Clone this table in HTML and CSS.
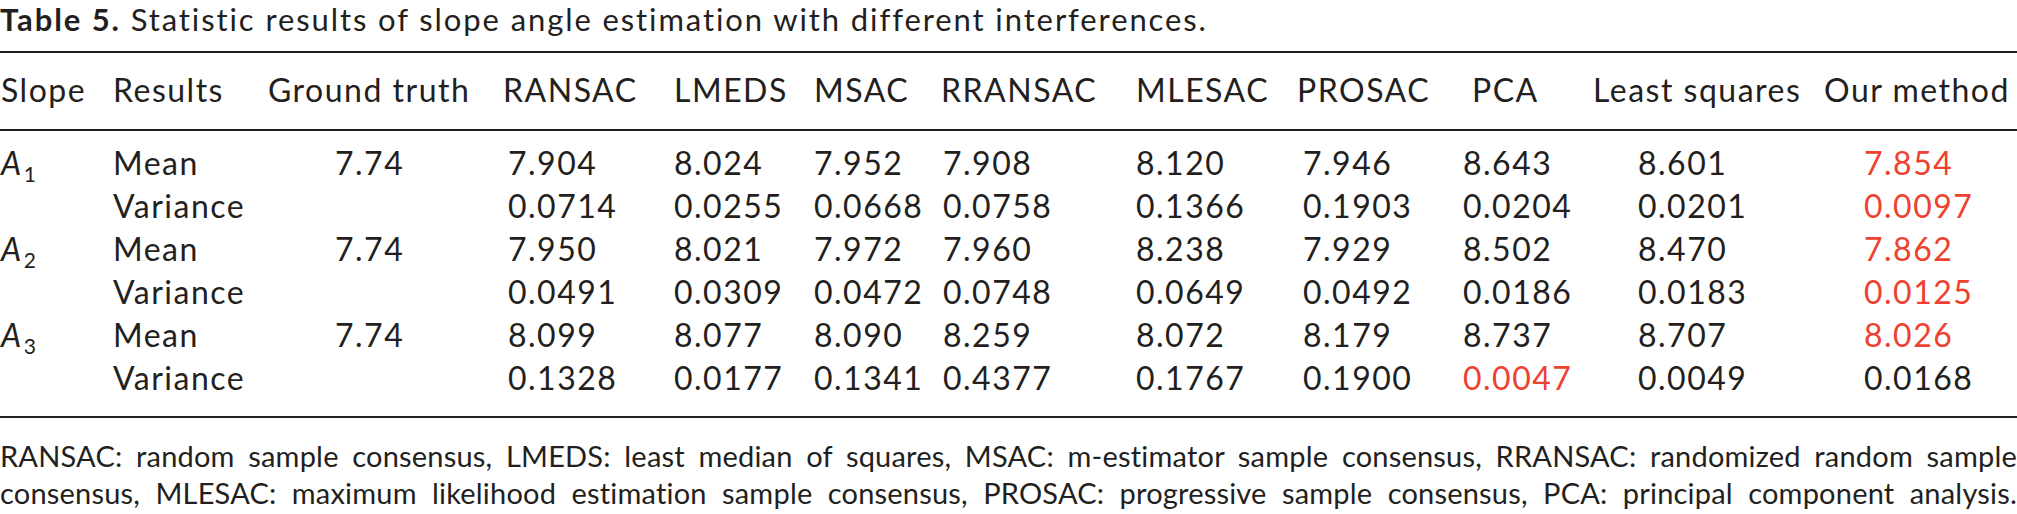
FILE: index.html
```html
<!DOCTYPE html>
<html lang="en">
<head>
<meta charset="utf-8">
<title>Table 5</title>
<link rel="stylesheet" href="styles.css">
</head>
<body>
<div class="page">
  <p class="caption"><b>Table 5.</b> Statistic results of slope angle estimation with different interferences.</p>
  <table class="results">
    <colgroup>
      <col class="c-slope"><col class="c-res"><col class="c-gt"><col class="c-ransac"><col class="c-lmeds"><col class="c-msac"><col class="c-rransac"><col class="c-mlesac"><col class="c-prosac"><col class="c-pca"><col class="c-ls"><col class="c-our">
    </colgroup>
    <thead>
      <tr>
        <th>Slope</th><th>Results</th><th class="h-gt">Ground truth</th><th class="h-ransac">RANSAC</th><th class="h-lmeds">LMEDS</th><th class="h-msac">MSAC</th><th class="h-rransac">RRANSAC</th><th class="h-mlesac">MLESAC</th><th class="h-prosac">PROSAC</th><th class="h-pca">PCA</th><th class="h-ls">Least squares</th><th class="h-our">Our method</th>
      </tr>
    </thead>
    <tbody>
      <tr class="first">
        <td><i>A</i><sub>1</sub></td><td>Mean</td><td class="v-gt">7.74</td><td class="v-ransac">7.904</td><td class="v-lmeds">8.024</td><td class="v-msac">7.952</td><td class="v-rransac">7.908</td><td class="v-mlesac">8.120</td><td class="v-prosac">7.946</td><td class="v-pca">8.643</td><td class="v-ls">8.601</td><td class="v-our hl">7.854</td>
      </tr>
      <tr>
        <td></td><td>Variance</td><td class="v-gt"></td><td class="v-ransac">0.0714</td><td class="v-lmeds">0.0255</td><td class="v-msac">0.0668</td><td class="v-rransac">0.0758</td><td class="v-mlesac">0.1366</td><td class="v-prosac">0.1903</td><td class="v-pca">0.0204</td><td class="v-ls">0.0201</td><td class="v-our hl">0.0097</td>
      </tr>
      <tr>
        <td><i>A</i><sub>2</sub></td><td>Mean</td><td class="v-gt">7.74</td><td class="v-ransac">7.950</td><td class="v-lmeds">8.021</td><td class="v-msac">7.972</td><td class="v-rransac">7.960</td><td class="v-mlesac">8.238</td><td class="v-prosac">7.929</td><td class="v-pca">8.502</td><td class="v-ls">8.470</td><td class="v-our hl">7.862</td>
      </tr>
      <tr>
        <td></td><td>Variance</td><td class="v-gt"></td><td class="v-ransac">0.0491</td><td class="v-lmeds">0.0309</td><td class="v-msac">0.0472</td><td class="v-rransac">0.0748</td><td class="v-mlesac">0.0649</td><td class="v-prosac">0.0492</td><td class="v-pca">0.0186</td><td class="v-ls">0.0183</td><td class="v-our hl">0.0125</td>
      </tr>
      <tr>
        <td><i>A</i><sub>3</sub></td><td>Mean</td><td class="v-gt">7.74</td><td class="v-ransac">8.099</td><td class="v-lmeds">8.077</td><td class="v-msac">8.090</td><td class="v-rransac">8.259</td><td class="v-mlesac">8.072</td><td class="v-prosac">8.179</td><td class="v-pca">8.737</td><td class="v-ls">8.707</td><td class="v-our hl">8.026</td>
      </tr>
      <tr class="last">
        <td></td><td>Variance</td><td class="v-gt"></td><td class="v-ransac">0.1328</td><td class="v-lmeds">0.0177</td><td class="v-msac">0.1341</td><td class="v-rransac">0.4377</td><td class="v-mlesac">0.1767</td><td class="v-prosac">0.1900</td><td class="v-pca hl">0.0047</td><td class="v-ls">0.0049</td><td class="v-our">0.0168</td>
      </tr>
    </tbody>
  </table>
  <p class="note"><span class="line">RANSAC: random sample consensus, LMEDS: least median of squares, MSAC: m-estimator sample consensus, RRANSAC: randomized random sample</span><span class="line">consensus, MLESAC: maximum likelihood estimation sample consensus, PROSAC: progressive sample consensus, PCA: principal component analysis.</span></p>
</div>
</body>
</html>
```

FILE: styles.css
```css
html, body {
  margin: 0;
  padding: 0;
  background: #ffffff;
}

body {
  font-family: "Lato", "Open Sans", sans-serif;
  font-size: 32px;
  letter-spacing: 1.5px;
  color: #231f20;
}

.page {
  width: 2017px;
  padding-top: 1px;
}

.caption {
  margin: 0 0 14px 0;
  font-size: 31px;
  letter-spacing: 1.9px;
  line-height: 36px;
  white-space: nowrap;
}

.caption b {
  font-weight: 700;
}

.results {
  width: 2017px;
  table-layout: fixed;
  border-collapse: separate;
  border-spacing: 0;
  border-top: 2px solid #231f20;
  border-bottom: 2px solid #231f20;
}

.c-slope { width: 113px; }
.c-res { width: 150px; }
.c-gt { width: 239px; }
.c-ransac { width: 170px; }
.c-lmeds { width: 140px; }
.c-msac { width: 128px; }
.c-rransac { width: 194px; }
.c-mlesac { width: 161px; }
.c-prosac { width: 165px; }
.c-pca { width: 130px; }
.c-ls { width: 230px; }
.c-our { width: 197px; }

.results th,
.results td {
  padding: 0;
  text-align: left;
  font-weight: 400;
  line-height: 43px;
  white-space: nowrap;
  vertical-align: baseline;
}

.results th {
  padding-top: 15px;
  padding-bottom: 18px;
  border-bottom: 2px solid #231f20;
}

.results tr.first td { padding-top: 10px; }
.results tr.last td { padding-bottom: 17px; }

.results i {
  font-style: italic;
}

.results sub {
  font-size: 21px;
  line-height: 0;
  vertical-align: -7px;
  margin-left: 1px;
}

th:first-child, td:first-child { padding-left: 1px; }

.h-gt { padding-left: 5px !important; }
.v-gt { padding-left: 72px !important; }
.h-ransac { padding-left: 1px !important; }
.v-ransac { padding-left: 6px !important; }
.h-lmeds { padding-left: 2px !important; }
.v-lmeds { padding-left: 2px !important; }
.h-msac { padding-left: 2px !important; }
.v-msac { padding-left: 2px !important; }
.h-rransac { padding-left: 1px !important; }
.v-rransac { padding-left: 3px !important; }
.h-mlesac { padding-left: 2px !important; }
.v-mlesac { padding-left: 2px !important; }
.h-prosac { padding-left: 2px !important; }
.v-prosac { padding-left: 8px !important; }
.h-pca { padding-left: 12px !important; }
.v-pca { padding-left: 3px !important; }
.h-ls { padding-left: 3px !important; }
.v-ls { padding-left: 48px !important; }
.h-our { padding-left: 4px !important; }
.v-our { padding-left: 44px !important; }

.hl { color: #ee4130; }

.note {
  margin: 19px 0 0 0;
  font-size: 29px;
  line-height: 37px;
  letter-spacing: 0.2px;
}

.note .line {
  display: block;
  white-space: nowrap;
  text-align: justify;
  text-align-last: justify;
}
```
